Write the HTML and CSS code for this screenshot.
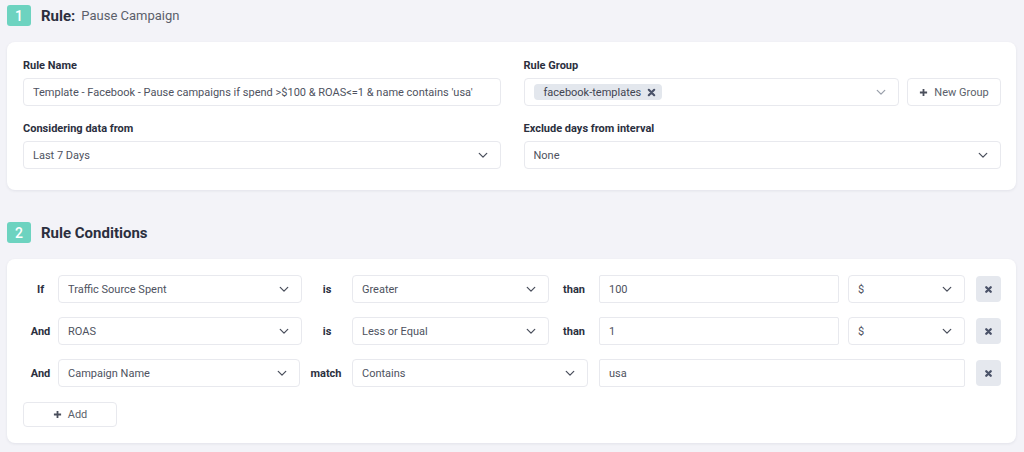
FILE: index.html
```html
<!DOCTYPE html>
<html>
<head>
<meta charset="utf-8">
<link rel="stylesheet" href="styles.css">
</head>
<body>
<div class="page">
  <div class="section-head">
    <span class="badge">1</span>
    <span class="head-title">Rule:</span>
    <span class="head-sub">Pause Campaign</span>
  </div>
  <div class="card card-rule">
    <div class="col">
      <div class="group">
        <div class="label">Rule Name</div>
        <div class="field"><span class="val">Template - Facebook - Pause campaigns if spend &gt;$100 &amp; ROAS&lt;=1 &amp; name contains 'usa'</span></div>
      </div>
      <div class="group">
        <div class="label">Considering data from</div>
        <div class="field select"><span class="val">Last 7 Days</span><svg class="chev" viewBox="0 0 12 8"><path d="M1.5 1.5 L6 6 L10.5 1.5"/></svg></div>
      </div>
    </div>
    <div class="col">
      <div class="group">
        <div class="label">Rule Group</div>
        <div class="group-row">
          <div class="field select tag-field">
            <span class="tag">facebook-templates <svg class="tag-x" viewBox="0 0 10 10"><path d="M2 2 L8 8 M8 2 L2 8"/></svg></span>
            <svg class="chev light" viewBox="0 0 12 8"><path d="M1.5 1.5 L6 6 L10.5 1.5"/></svg>
          </div>
          <div class="btn new-group"><svg class="plus" viewBox="0 0 10 10"><path d="M5 1 V9 M1 5 H9"/></svg>New Group</div>
        </div>
      </div>
      <div class="group">
        <div class="label">Exclude days from interval</div>
        <div class="field select"><span class="val">None</span><svg class="chev" viewBox="0 0 12 8"><path d="M1.5 1.5 L6 6 L10.5 1.5"/></svg></div>
      </div>
    </div>
  </div>

  <div class="section-head second">
    <span class="badge">2</span>
    <span class="head-title big">Rule Conditions</span>
  </div>
  <div class="card card-cond">
    <div class="cond-row">
      <span class="kw lead">If</span>
      <div class="field select metric"><span class="val">Traffic Source Spent</span><svg class="chev" viewBox="0 0 12 8"><path d="M1.5 1.5 L6 6 L10.5 1.5"/></svg></div>
      <span class="kw op">is</span>
      <div class="field select cmp"><span class="val">Greater</span><svg class="chev" viewBox="0 0 12 8"><path d="M1.5 1.5 L6 6 L10.5 1.5"/></svg></div>
      <span class="kw op">than</span>
      <div class="field num"><span class="val">100</span></div>
      <div class="field select cur"><span class="val">$</span><svg class="chev" viewBox="0 0 12 8"><path d="M1.5 1.5 L6 6 L10.5 1.5"/></svg></div>
      <div class="del"><svg viewBox="0 0 10 10"><path d="M2.5 2.5 L7.5 7.5 M7.5 2.5 L2.5 7.5"/></svg></div>
    </div>
    <div class="cond-row">
      <span class="kw lead">And</span>
      <div class="field select metric"><span class="val">ROAS</span><svg class="chev" viewBox="0 0 12 8"><path d="M1.5 1.5 L6 6 L10.5 1.5"/></svg></div>
      <span class="kw op">is</span>
      <div class="field select cmp"><span class="val">Less or Equal</span><svg class="chev" viewBox="0 0 12 8"><path d="M1.5 1.5 L6 6 L10.5 1.5"/></svg></div>
      <span class="kw op">than</span>
      <div class="field num"><span class="val">1</span></div>
      <div class="field select cur"><span class="val">$</span><svg class="chev" viewBox="0 0 12 8"><path d="M1.5 1.5 L6 6 L10.5 1.5"/></svg></div>
      <div class="del"><svg viewBox="0 0 10 10"><path d="M2.5 2.5 L7.5 7.5 M7.5 2.5 L2.5 7.5"/></svg></div>
    </div>
    <div class="cond-row">
      <span class="kw lead">And</span>
      <div class="field select metric m3"><span class="val">Campaign Name</span><svg class="chev" viewBox="0 0 12 8"><path d="M1.5 1.5 L6 6 L10.5 1.5"/></svg></div>
      <span class="kw op op3">match</span>
      <div class="field select cmp3"><span class="val">Contains</span><svg class="chev" viewBox="0 0 12 8"><path d="M1.5 1.5 L6 6 L10.5 1.5"/></svg></div>
      <div class="field text3"><span class="val">usa</span></div>
      <div class="del"><svg viewBox="0 0 10 10"><path d="M2.5 2.5 L7.5 7.5 M7.5 2.5 L2.5 7.5"/></svg></div>
    </div>
    <div class="btn add"><svg class="plus" viewBox="0 0 10 10"><path d="M5 1 V9 M1 5 H9"/></svg>Add</div>
  </div>
</div>
</body>
</html>
```

FILE: styles.css
```css
* { box-sizing: border-box; }
html, body { margin: 0; padding: 0; }
body {
  background: #f3f3f8;
  font-family: Roboto, "Liberation Sans", sans-serif;
  color: #2b2f3e;
  width: 1024px;
  height: 452px;
  overflow: hidden;
}
.page { padding: 5px 8px 0 7px; }

.section-head {
  display: flex;
  align-items: center;
  height: 21px;
  margin-bottom: 16px;
}
.section-head.second { margin-top: 32px; }
.badge {
  width: 24px;
  height: 21px;
  border-radius: 3px;
  background: #6dd3c0;
  color: #fff;
  font-weight: 500;
  font-size: 14px;
  display: flex;
  align-items: center;
  justify-content: center;
  margin-right: 10px;
}
.head-title {
  font-weight: 700;
  font-size: 15px;
  color: #2b2f3e;
  margin-right: 6px;
}
.head-title.big { font-size: 15px; }
.head-sub { font-size: 13px; color: #5b5f6b; }

.card {
  background: #fff;
  border-radius: 8px;
  box-shadow: 0 1px 3px rgba(30, 35, 60, 0.08);
}
.card-rule {
  display: flex;
  gap: 23px;
  padding: 16px 15px 21px 16px;
}
.col { flex: 1 1 0; min-width: 0; display: flex; flex-direction: column; gap: 15px; }
.label {
  font-size: 11px;
  font-weight: 700;
  line-height: 16px;
  margin-bottom: 4px;
  color: #2b2f3e;
}
.field {
  height: 28px;
  border: 1px solid #e8e9ee;
  border-radius: 4px;
  background: #fff;
  display: flex;
  align-items: center;
  padding: 0 9px;
  font-size: 11px;
  color: #4e5260;
  min-width: 0;
}
.field .val { flex: 1; white-space: nowrap; overflow: hidden; }
.chev {
  width: 10px;
  height: 7px;
  fill: none;
  stroke: #4a4f5c;
  stroke-width: 1.5;
  stroke-linecap: round;
  stroke-linejoin: round;
  margin-right: 3px;
}
.chev.light { stroke: #9aa0ab; }
.group-row { display: flex; gap: 8px; }
.tag-field { flex: 1; padding-left: 9px; justify-content: space-between; }
.tag {
  background: #e3e7ed;
  border-radius: 4px;
  height: 16px;
  padding: 0 6px 0 10px;
  display: flex;
  align-items: center;
  font-size: 11px;
  color: #3f4451;
}
.tag-x {
  width: 9px;
  height: 9px;
  margin-left: 6px;
  stroke: #4a5268;
  stroke-width: 2.4;
  stroke-linecap: round;
}
.btn {
  border: 1px solid #e8e9ee;
  border-radius: 4px;
  background: #fff;
  display: flex;
  align-items: center;
  justify-content: center;
  font-size: 11px;
  color: #5b5f6b;
}
.plus {
  width: 9px;
  height: 9px;
  stroke: #4a4f5c;
  stroke-width: 2;
  margin-right: 6px;
}
.new-group { width: 94px; height: 28px; flex: none; }

.card-cond {
  padding: 16px 15px 16px 16px;
  display: flex;
  flex-direction: column;
  gap: 14px;
}
.cond-row { display: flex; align-items: center; height: 28px; }
.kw {
  font-size: 11px;
  font-weight: 700;
  color: #2b2f3e;
  text-align: center;
}
.lead { width: 35px; }
.op { width: 50px; }
.metric { width: 244px; }
.m3 { width: 242px; }
.op3 { width: 52px; }
.cmp { width: 197px; }
.cmp3 { width: 236px; margin-right: 11px; }
.num { width: 240px; border-radius: 2px; margin-right: 9px; }
.cur { width: 117px; margin-right: 11px; }
.text3 { width: 366px; border-radius: 2px; margin-right: 11px; }
.del {
  width: 25px;
  height: 26px;
  border-radius: 4px;
  background: #e5e8ee;
  display: flex;
  align-items: center;
  justify-content: center;
}
.del svg {
  width: 9px;
  height: 9px;
  stroke: #4a5268;
  stroke-width: 2.6;
  stroke-linecap: round;
}
.add { width: 94px; height: 25px; margin-top: 1px; }
```
